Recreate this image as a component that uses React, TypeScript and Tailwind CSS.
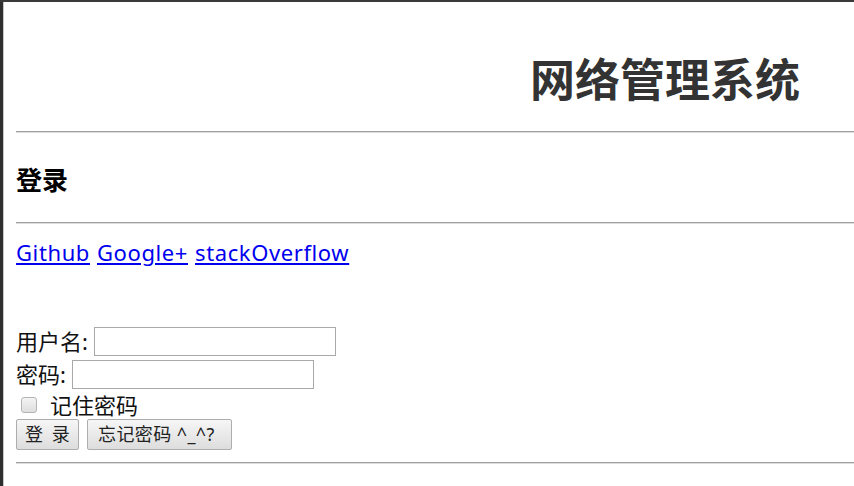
import React from "react";

export default function App() {
  const font = { fontFamily: '"Noto Sans", "Noto Sans CJK SC", sans-serif' };
  return (
    <div
      className="w-[854px] h-[486px] overflow-hidden bg-white border-t-2 border-t-[#3a3a3a] flex"
      style={font}
    >
      <div className="w-[3px] bg-[#2e2e2e] shrink-0" />
      <div className="w-[1px] bg-[#c8c8c8] shrink-0" />
      <div className="flex-1 flex flex-col pl-[12px]">
        <div className="h-[129px] pt-[25px] flex items-center justify-end pr-[54px]">
          <h1 className="text-[45px] font-bold text-[#333] leading-none">网络管理系统</h1>
        </div>
        <div className="h-[2px] border-t border-t-[#a0a0a0] border-b border-b-[#dcdcdc]" />
        <div className="h-[89px] pt-[5px] flex items-center">
          <h3 className="text-[26px] font-bold text-black leading-none">登录</h3>
        </div>
        <div className="h-[2px] border-t border-t-[#a0a0a0] border-b border-b-[#dcdcdc]" />
        <div className="mt-[16px] h-[24px] flex items-center gap-[7px] text-[22px] leading-[24px] tracking-[0.6px]">
          <a href="#" className="text-[#0000ee] underline">Github</a>
          <a href="#" className="text-[#0000ee] underline">Google+</a>
          <a href="#" className="text-[#0000ee] underline">stackOverflow</a>
        </div>
        <div className="mt-[63px] h-[29px] flex items-center gap-[6px] text-[22px] text-[#111]">
          <span>用户名:</span>
          <input className="w-[242px] h-[29px] border border-[#a9a9a9] bg-white" />
        </div>
        <div className="mt-[4px] h-[29px] flex items-center gap-[6px] text-[22px] text-[#111]">
          <span>密码:</span>
          <input type="password" className="w-[242px] h-[29px] border border-[#a9a9a9] bg-white" />
        </div>
        <div className="mt-[2px] h-[28px] flex items-center text-[22px] text-[#111]">
          <span className="ml-[5px] w-[16px] h-[16px] rounded-[3px] border border-[#b4b4b4] bg-gradient-to-b from-[#f4f4f4] to-[#dedede]" />
          <span className="ml-[13px]">记住密码</span>
        </div>
        <div className="h-[31px] flex items-center gap-[8px]">
          <button className="w-[63px] h-[31px] flex items-center justify-start pl-[8px] border border-[#adadad] rounded-[2px] bg-gradient-to-b from-[#f6f6f6] to-[#dddddd] text-[18px] text-[#222]">
            <span className="tracking-[2px]">登 录</span>
          </button>
          <button className="w-[145px] h-[31px] flex items-center justify-start pl-[10px] border border-[#adadad] rounded-[2px] bg-gradient-to-b from-[#f6f6f6] to-[#dddddd] text-[18px] text-[#222]">
            <span className="whitespace-nowrap tracking-[0.4px]">忘记密码 ^_^?</span>
          </button>
        </div>
        <div className="mt-[12px] h-[2px] border-t border-t-[#a0a0a0] border-b border-b-[#dcdcdc]" />
      </div>
    </div>
  );
}
